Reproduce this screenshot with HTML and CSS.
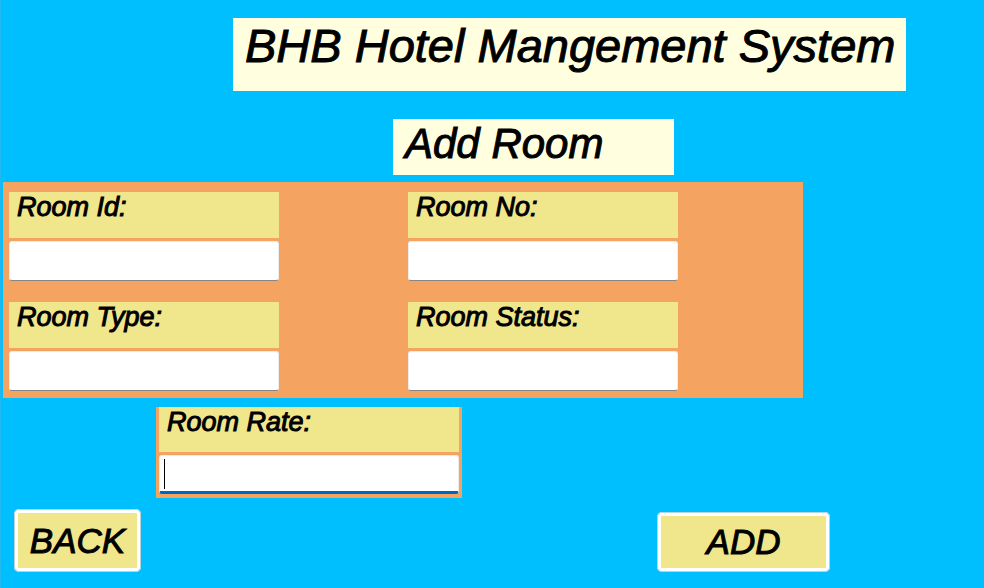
FILE: index.html
```html
<!DOCTYPE html>
<html lang="en">
<head>
<meta charset="utf-8">
<title>BHB Hotel Mangement System</title>
<link rel="stylesheet" href="styles.css">
</head>
<body>
<h1 class="title">BHB Hotel Mangement System</h1>
<h2 class="subtitle">Add Room</h2>
<form class="form">
  <div class="panel">
    <div class="field">
      <label for="room-id">Room Id:</label>
      <input id="room-id" type="text">
    </div>
    <div class="field">
      <label for="room-no">Room No:</label>
      <input id="room-no" type="text">
    </div>
    <div class="field">
      <label for="room-type">Room Type:</label>
      <input id="room-type" type="text">
    </div>
    <div class="field">
      <label for="room-status">Room Status:</label>
      <input id="room-status" type="text">
    </div>
  </div>
  <div class="rate">
    <div class="field field-active">
      <label for="room-rate">Room Rate:</label>
      <input id="room-rate" type="text">
      <span class="caret"></span>
    </div>
  </div>
  <div class="actions">
    <button class="back" type="button">BACK</button>
    <button class="add" type="submit">ADD</button>
  </div>
</form>
</body>
</html>
```
FILE: styles.css
```css
* {
  box-sizing: border-box;
}

body {
  margin: 0;
  min-height: 100vh;
  display: flow-root;
  background: #00bfff;
  box-shadow: inset 1px 0 #22b8f0;
  color: #000;
  font-family: "Liberation Sans", Arial, sans-serif;
  font-style: italic;
  -webkit-text-stroke: 1px #000;
}

.title,
.subtitle {
  background: #ffffe0;
  font-weight: 400;
  white-space: nowrap;
}

.title {
  margin: 18px 78px 0 233px;
  padding: 0 12px;
  height: 73px;
  font-size: 47px;
  line-height: 56px;
}

.subtitle {
  margin: 28px 310px 0 393px;
  padding: 0 12px;
  height: 56px;
  font-size: 42px;
  line-height: 50px;
}

.panel {
  display: grid;
  grid-template-columns: 1fr 1fr;
  gap: 21px 4px;
  margin: 7px 181px 0 3px;
  padding: 10px 0 7px 6px;
  background: #f4a460;
}

.panel .field {
  width: 270px;
  max-width: 100%;
}

.field {
  position: relative;
  display: flex;
  flex-direction: column;
  gap: 3px;
}

.field label {
  height: 46px;
  padding-left: 8px;
  background: #f0e68c;
  font-size: 27px;
  line-height: 30px;
}

.field input {
  width: 100%;
  height: 40px;
  padding: 0 6px;
  border: 1px solid #ececec;
  border-bottom: 1px solid #868686;
  border-radius: 3px;
  outline: none;
  background: #fff;
  font: inherit;
  font-size: 27px;
}

.rate {
  width: 306px;
  margin: 9px 0 0 156px;
  padding: 0 3px 4px;
  background: #f4a460;
}

.field-active label {
  height: 45px;
}

.field-active input {
  height: 39px;
  border-bottom: 3px solid #0067c0;
}

.caret {
  position: absolute;
  left: 5px;
  bottom: 5px;
  width: 1px;
  height: 30px;
  background: #000;
}

.actions {
  display: flex;
  justify-content: space-between;
  align-items: flex-end;
  margin: 11px 154px 0 14px;
}

.actions button {
  padding: 0;
  border: 4px solid #fff;
  border-radius: 5px;
  outline: 1px solid #b5d3dc;
  outline-offset: -1px;
  background: #f0e68c;
  color: #000;
  font: inherit;
  font-size: 35px;
  -webkit-text-stroke: 1px #000;
}

.back {
  width: 127px;
  height: 63px;
}

.add {
  width: 173px;
  height: 60px;
}
```
